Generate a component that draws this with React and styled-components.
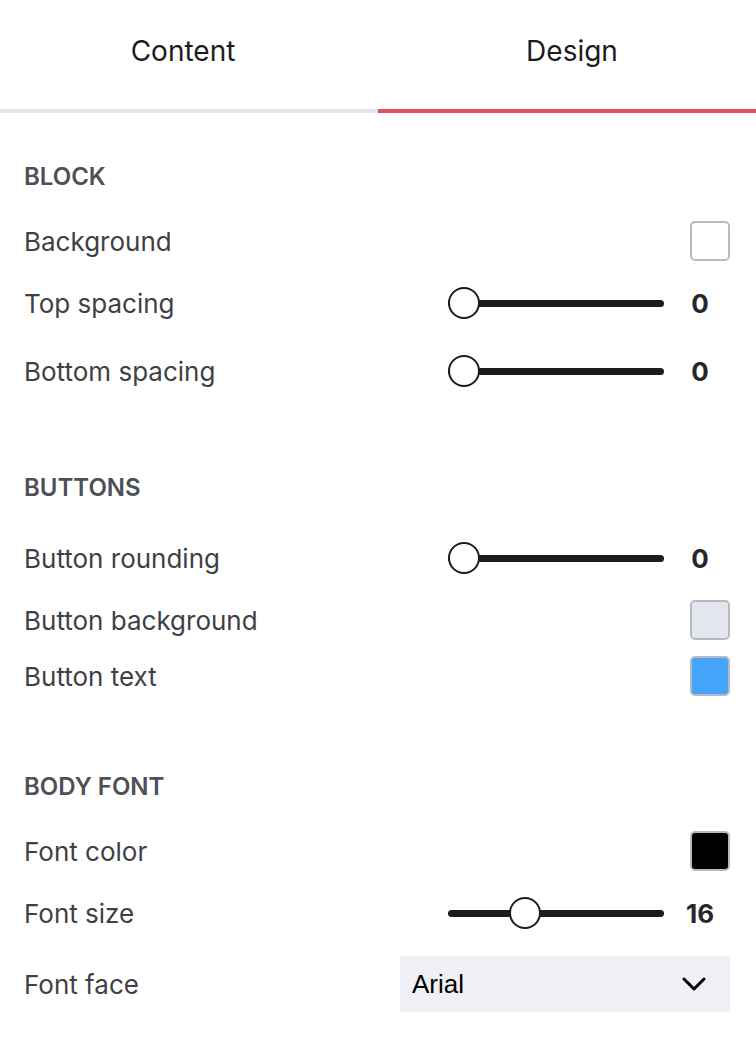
import React, { useState } from "react";
import styled, { createGlobalStyle } from "styled-components";

const GlobalStyle = createGlobalStyle`
    *{
        box-sizing: border-box;
    }
    body{
        margin: 0;
        background: #fff;
        font-family: Inter, "Noto Sans", sans-serif;
        color: #3f3f46;
    }
`

const sections = [
    {
        title: "BLOCK",
        rows: [
            { label: "Background", type: "color", value: "#ffffff" },
            { label: "Top spacing", type: "slider", value: 0, min: 0, max: 100 },
            { label: "Bottom spacing", type: "slider", value: 0, min: 0, max: 100 },
        ],
    },
    {
        title: "BUTTONS",
        rows: [
            { label: "Button rounding", type: "slider", value: 0, min: 0, max: 30 },
            { label: "Button background", type: "color", value: "#e4e6ee" },
            { label: "Button text", type: "color", value: "#45a4fb" },
        ],
    },
    {
        title: "BODY FONT",
        rows: [
            { label: "Font color", type: "color", value: "#000000" },
            { label: "Font size", type: "slider", value: 16, min: 12, max: 24 },
            { label: "Font face", type: "select", value: "Arial" },
        ],
    },
]

const SliderControl = ({ row }) => {
    const [value, setValue] = useState(row.value)
    return (
        <SliderGroup>
            <Range
                type="range"
                min={row.min}
                max={row.max}
                value={value}
                onChange={(e) => setValue(Number(e.target.value))}
            />
            <Value>{value}</Value>
        </SliderGroup>
    )
}

const Control = ({ row }) => {
    if (row.type === "color") return <Swatch color={row.value} />
    if (row.type === "slider") return <SliderControl row={row} />
    return (
        <Select>
            <span>{row.value}</span>
            <svg width="24" height="14" viewBox="0 0 24 14" fill="none">
                <path d="M2 2l10 10L22 2" stroke="#000" strokeWidth="3" strokeLinecap="round" strokeLinejoin="round" />
            </svg>
        </Select>
    )
}

const App = () => {
    const [tab, setTab] = useState("design")

    return (
        <Panel>
            <GlobalStyle />
            <Tabs>
                <Tab active={tab === "content"} shift={-6} onClick={() => setTab("content")}>Content</Tab>
                <Tab active={tab === "design"} shift={5} onClick={() => setTab("design")}>Design</Tab>
            </Tabs>
            {sections.map((section) => (
                <Section key={section.title}>
                    <SectionTitle>{section.title}</SectionTitle>
                    {section.rows.map((row) => (
                        <Row key={row.label} type={row.type}>
                            <Label>{row.label}</Label>
                            <Control row={row} />
                        </Row>
                    ))}
                </Section>
            ))}
        </Panel>
    )
}

export default App;

const Panel = styled.div`
    width: 756px;
    min-height: 1042px;
    background: #fff;
`

const Tabs = styled.div`
    display: flex;
`

const Tab = styled.button`
    flex: 0 0 50%;
    height: 113px;
    padding: 0 ${({ shift }) => shift < 0 ? -shift * 2 : 0}px 7px ${({ shift }) => shift > 0 ? shift * 2 : 0}px;
    border: none;
    border-bottom: 4px solid ${({ active }) => active ? "#e0535a" : "#e4e4ea"};
    background: none;
    font-family: Inter, "Noto Sans", sans-serif;
    font-size: 28px;
    color: #1c1c1f;
    cursor: pointer;
`

const Section = styled.div`
    padding: 52px 26px 19px 24px;
`

const SectionTitle = styled.h3`
    margin: 0 0 24px 0;
    height: 24px;
    line-height: 24px;
    font-size: 24px;
    font-weight: 600;
    color: #4f4f57;
`

const rowHeights = { color: 56, slider: 68, select: 74 }

const Row = styled.div`
    display: flex;
    align-items: center;
    justify-content: space-between;
    height: ${({ type }) => rowHeights[type]}px;
`

const Label = styled.span`
    font-size: 26px;
    color: #3f3f46;
`

const Swatch = styled.div`
    width: 40px;
    height: 40px;
    border: 2px solid #b9b9c1;
    border-radius: 5px;
    background: ${({ color }) => color};
`

const SliderGroup = styled.div`
    display: flex;
    align-items: center;
    gap: 6px;
`

const Range = styled.input`
    -webkit-appearance: none;
    appearance: none;
    width: 216px;
    height: 32px;
    margin: 0;
    background: transparent;
    cursor: pointer;
    &::-webkit-slider-runnable-track{
        height: 7px;
        border-radius: 4px;
        background: #1c1c1f;
    }
    &::-webkit-slider-thumb{
        -webkit-appearance: none;
        width: 32px;
        height: 32px;
        margin-top: -12.5px;
        border-radius: 50%;
        border: 2px solid #1c1c1f;
        background: #fff;
    }
`

const Value = styled.span`
    width: 60px;
    text-align: center;
    font-size: 26px;
    font-weight: 700;
    color: #27272a;
`

const Select = styled.div`
    display: flex;
    align-items: center;
    justify-content: space-between;
    width: 330px;
    height: 56px;
    padding: 0 24px 0 12px;
    background: #efeff5;
    font-family: Arial, "Liberation Sans", sans-serif;
    font-size: 26px;
    color: #000;
    cursor: pointer;
`
